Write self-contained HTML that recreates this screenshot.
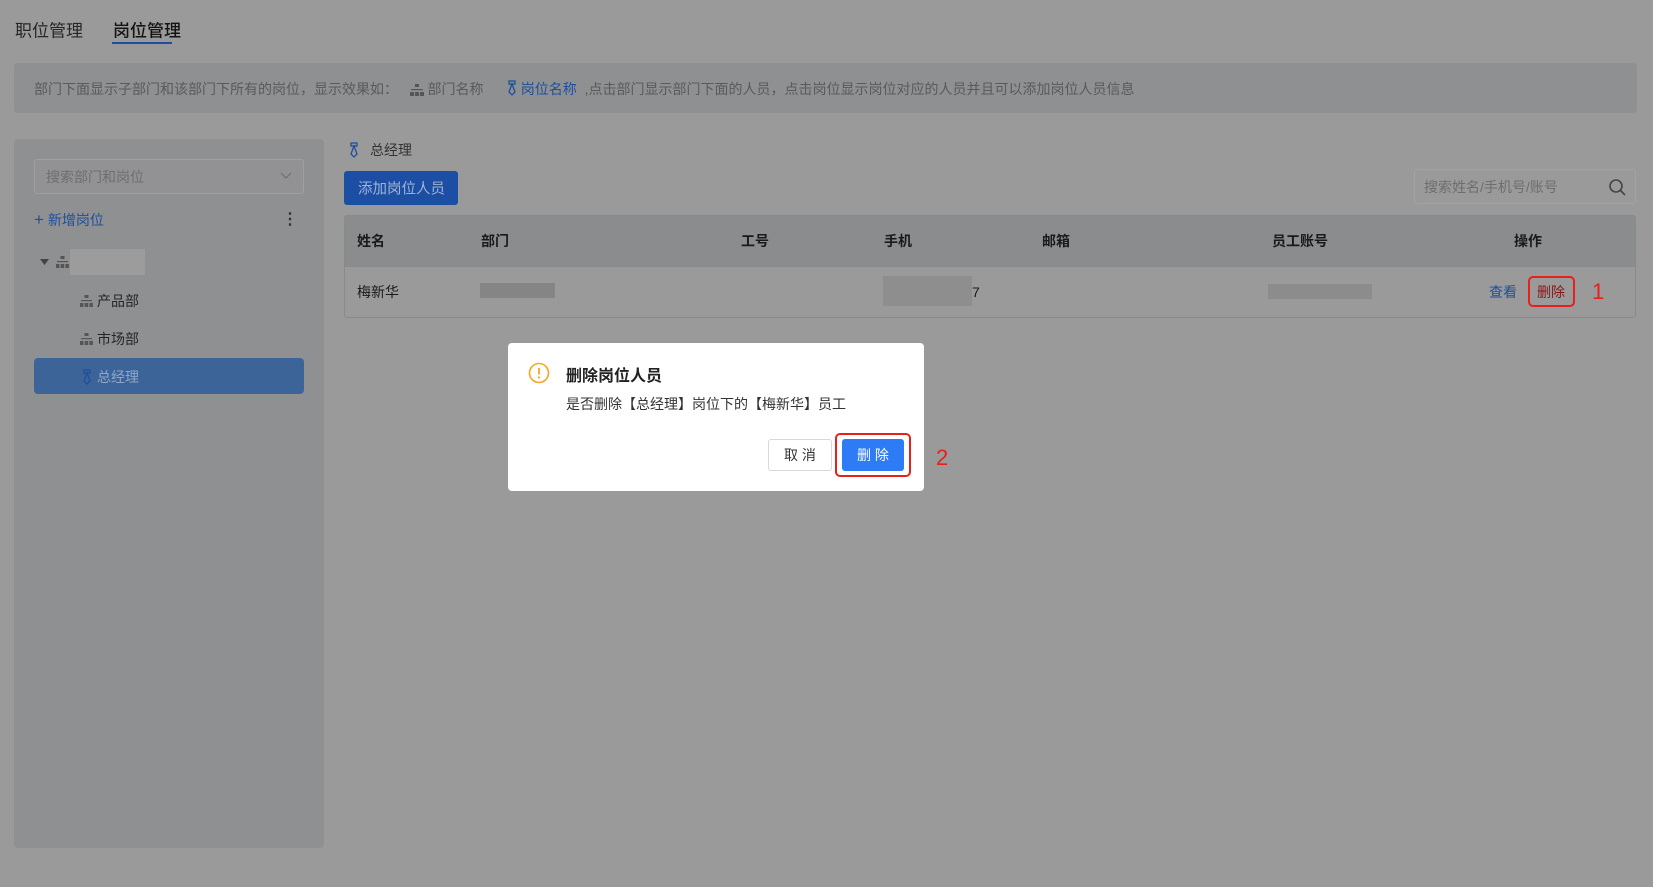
<!DOCTYPE html>
<html><head><meta charset="utf-8"><style>
*{box-sizing:border-box;margin:0;padding:0}
body{width:1653px;height:887px;background:#9a9a9a;font-family:"Liberation Sans","Noto Sans CJK SC",sans-serif;position:relative;overflow:hidden;color:#1a1a1a}
.a{position:absolute;white-space:nowrap}
.c{transform:translateY(-50%)}
svg.i{display:inline-block;vertical-align:-2px}
</style></head><body>
<div class="a c" style="left:15px;top:29px;font-size:17px;color:#262626">职位管理</div>
<div class="a c" style="left:113px;top:29px;font-size:17px;color:#141414;font-weight:500">岗位管理</div>
<div class="a" style="left:112px;top:42px;width:60px;height:2px;background:#1c4fa0"></div>

<div class="a" style="left:14px;top:63px;width:1623px;height:50px;background:#8f9091;border-radius:3px"></div>
<div class="a c" style="left:34px;top:89px;font-size:14px;color:#5a5a5a">部门下面显示子部门和该部门下所有的岗位，显示效果如： &nbsp; <svg class="i" width="14" height="12"><rect x="5" y="0" width="4" height="3" fill="#555"/><rect x="1" y="5" width="12" height="1.2" fill="#555"/><rect x="0" y="8" width="4" height="4" fill="#555"/><rect x="5" y="8" width="4" height="4" fill="#555"/><rect x="10" y="8" width="4" height="4" fill="#555"/></svg> 部门名称 &nbsp; &nbsp; &nbsp;<span style="color:#1c4fa0"><svg class="i" width="10" height="16"><rect x="2" y="1" width="6" height="3" fill="none" stroke="#1c4fa0" stroke-width="1.3"/><path d="M5 4 L2 12 L5 15 L8 12 Z" fill="none" stroke="#1c4fa0" stroke-width="1.3"/></svg> 岗位名称</span> &nbsp;,点击部门显示部门下面的人员，点击岗位显示岗位对应的人员并且可以添加岗位人员信息</div>

<div class="a" style="left:14px;top:139px;width:310px;height:709px;background:#8f9092;border-radius:4px"></div>
<div class="a" style="left:34px;top:159px;width:270px;height:35px;border:1px solid #a0a0a2;border-radius:3px;background:#929294"></div>
<div class="a c" style="left:46px;top:177px;font-size:14px;color:#6e6e6e">搜索部门和岗位</div>
<svg class="a" style="left:280px;top:172px" width="12" height="8"><path d="M1 1 L6 6 L11 1" fill="none" stroke="#6e6e6e" stroke-width="1.2"/></svg>
<div class="a c" style="left:34px;top:220px;font-size:14px;color:#1c4fa0"><span style="font-size:17px">+</span> 新增岗位</div>
<div class="a c" style="left:282px;top:219px;font-size:16px;color:#333;font-weight:bold">⋮</div>
<svg class="a" style="left:40px;top:259px" width="9" height="7"><path d="M0 0 L9 0 L4.5 6Z" fill="#444"/></svg>
<svg class="a" style="left:56px;top:256px" width="13" height="12"><rect x="4.5" y="0" width="4" height="3" fill="#555"/><rect x="1" y="5" width="11" height="1.2" fill="#555"/><rect x="0" y="8" width="3.5" height="4" fill="#555"/><rect x="4.7" y="8" width="3.5" height="4" fill="#555"/><rect x="9.4" y="8" width="3.5" height="4" fill="#555"/></svg>
<div class="a" style="left:70px;top:249px;width:75px;height:26px;background:#9c9c9c"></div>
<svg class="a" style="left:80px;top:295px" width="13" height="12"><rect x="4.5" y="0" width="4" height="3" fill="#555"/><rect x="1" y="5" width="11" height="1.2" fill="#555"/><rect x="0" y="8" width="3.5" height="4" fill="#555"/><rect x="4.7" y="8" width="3.5" height="4" fill="#555"/><rect x="9.4" y="8" width="3.5" height="4" fill="#555"/></svg>
<div class="a c" style="left:97px;top:301px;font-size:14px;color:#262626">产品部</div>
<svg class="a" style="left:80px;top:333px" width="13" height="12"><rect x="4.5" y="0" width="4" height="3" fill="#555"/><rect x="1" y="5" width="11" height="1.2" fill="#555"/><rect x="0" y="8" width="3.5" height="4" fill="#555"/><rect x="4.7" y="8" width="3.5" height="4" fill="#555"/><rect x="9.4" y="8" width="3.5" height="4" fill="#555"/></svg>
<div class="a c" style="left:97px;top:339px;font-size:14px;color:#262626">市场部</div>
<div class="a" style="left:34px;top:358px;width:270px;height:36px;background:#3d6499;border-radius:4px"></div>
<svg class="a" style="left:82px;top:369px" width="10" height="16"><rect x="2" y="1" width="6" height="3" fill="none" stroke="#1c4fa0" stroke-width="1.3"/><path d="M5 4 L2 12 L5 15 L8 12 Z" fill="none" stroke="#1c4fa0" stroke-width="1.3"/></svg>
<div class="a c" style="left:97px;top:377px;font-size:14px;color:#8fa6c6">总经理</div>

<svg class="a" style="left:349px;top:142px" width="10" height="16"><rect x="2" y="1" width="6" height="3" fill="none" stroke="#1c4fa0" stroke-width="1.3"/><path d="M5 4 L2 12 L5 15 L8 12 Z" fill="none" stroke="#1c4fa0" stroke-width="1.3"/></svg>
<div class="a c" style="left:370px;top:150px;font-size:14px;color:#333">总经理</div>
<div class="a" style="left:344px;top:171px;width:114px;height:34px;background:#1c4fa3;border-radius:3px"></div>
<div class="a c" style="left:358px;top:188px;font-size:14.5px;color:#9fb4d6">添加岗位人员</div>
<div class="a" style="left:1414px;top:169px;width:222px;height:35px;border:1px solid #a3a3a3;border-radius:3px"></div>
<div class="a c" style="left:1424px;top:187px;font-size:14px;color:#6e6e6e">搜索姓名/手机号/账号</div>
<svg class="a" style="left:1608px;top:178px" width="20" height="20"><circle cx="8" cy="8" r="6" fill="none" stroke="#444" stroke-width="1.6"/><line x1="12.5" y1="12.5" x2="17" y2="17" stroke="#444" stroke-width="1.6"/></svg>

<div class="a" style="left:344px;top:215px;width:1292px;height:103px;border:1px solid #8a8a8a;border-radius:3px;background:#9a9a9a"></div>
<div class="a" style="left:345px;top:216px;width:1290px;height:50px;background:#8b8c8e"></div>
<div class="a" style="left:345px;top:266px;width:1290px;height:1px;background:#8a8a8a"></div>
<div class="a c" style="left:357px;top:241px;font-size:14px;font-weight:bold;color:#1a1a1a">姓名</div>
<div class="a c" style="left:481px;top:241px;font-size:14px;font-weight:bold;color:#1a1a1a">部门</div>
<div class="a c" style="left:741px;top:241px;font-size:14px;font-weight:bold;color:#1a1a1a">工号</div>
<div class="a c" style="left:884px;top:241px;font-size:14px;font-weight:bold;color:#1a1a1a">手机</div>
<div class="a c" style="left:1042px;top:241px;font-size:14px;font-weight:bold;color:#1a1a1a">邮箱</div>
<div class="a c" style="left:1272px;top:241px;font-size:14px;font-weight:bold;color:#1a1a1a">员工账号</div>
<div class="a c" style="left:1514px;top:241px;font-size:14px;font-weight:bold;color:#1a1a1a">操作</div>
<div class="a c" style="left:357px;top:292px;font-size:14px;color:#1a1a1a">梅新华</div>
<div class="a" style="left:480px;top:283px;width:75px;height:15px;background:#858585"></div>
<div class="a" style="left:883px;top:276px;width:89px;height:30px;background:#8e8e8e"></div>
<div class="a c" style="left:972px;top:292px;font-size:14px;color:#1a1a1a">7</div>
<div class="a" style="left:1268px;top:284px;width:104px;height:15px;background:#8c8c8c"></div>
<div class="a c" style="left:1489px;top:292px;font-size:14px;color:#1c4fa0">查看</div>
<div class="a" style="left:1528px;top:276px;width:47px;height:31px;border:2px solid #e8201c;border-radius:5px"></div>
<div class="a c" style="left:1537px;top:292px;font-size:14px;color:#8b1616">删除</div>
<div class="a c" style="left:1592px;top:292px;font-size:22px;color:#e8201c">1</div>

<div class="a" style="left:508px;top:343px;width:416px;height:148px;background:#fff;border-radius:4px"></div>
<svg class="a" style="left:528px;top:362px" width="22" height="22"><circle cx="11" cy="11" r="9.5" fill="none" stroke="#f5a623" stroke-width="1.6"/><line x1="11" y1="6" x2="11" y2="12.5" stroke="#f5a623" stroke-width="1.8"/><circle cx="11" cy="15.5" r="1.1" fill="#f5a623"/></svg>
<div class="a c" style="left:566px;top:374px;font-size:16px;font-weight:bold;color:#222">删除岗位人员</div>
<div class="a c" style="left:566px;top:404px;font-size:14px;color:#333">是否删除【总经理】岗位下的【梅新华】员工</div>
<div class="a" style="left:768px;top:439px;width:64px;height:32px;border:1px solid #d9d9d9;border-radius:3px;background:#fff;font-size:14px;color:#333;text-align:center;line-height:30px">取 消</div>
<div class="a" style="left:835px;top:433px;width:76px;height:44px;border:2px solid #e8201c;border-radius:5px"></div>
<div class="a" style="left:842px;top:439px;width:62px;height:32px;border-radius:3px;background:#2d7cf6;font-size:14px;color:#fff;text-align:center;line-height:32px">删 除</div>
<div class="a c" style="left:936px;top:458px;font-size:22px;color:#e8201c">2</div>
</body></html>
